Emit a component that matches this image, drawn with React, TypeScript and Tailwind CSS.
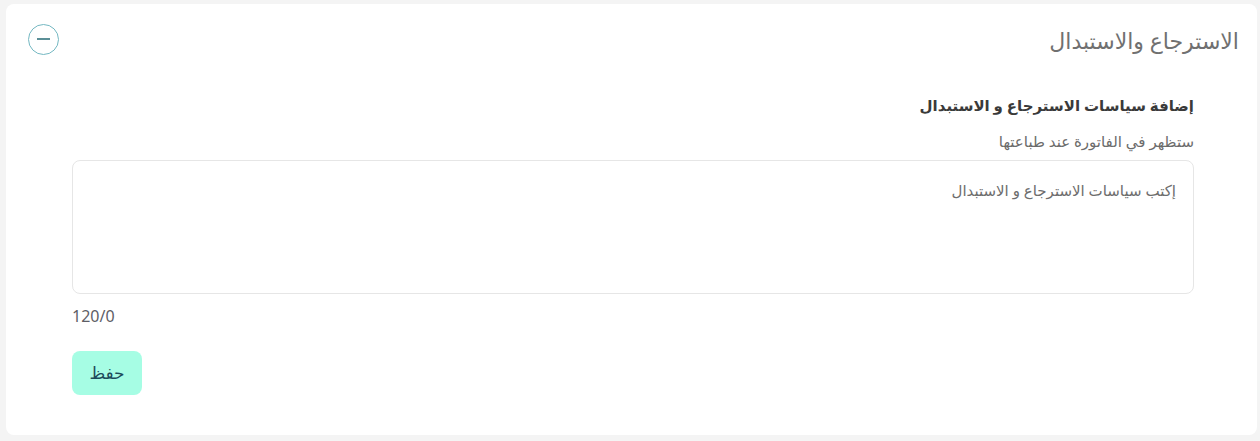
import React, { useState } from "react";

const MAX = 120;

export default function App() {
  const [policy, setPolicy] = useState("");

  return (
    <div
      className="min-h-[441px] bg-[#f4f4f4] pt-1 pb-[6px] pl-[6px] pr-[3px]"
      style={{ fontFamily: '"Noto Sans", "DejaVu Sans", sans-serif' }}
    >
      <div dir="rtl" className="bg-white rounded-lg h-[431px] pt-[18px] pr-[18px] pl-[22px]">
        {/* header */}
        <div className="flex items-center justify-between">
          <h2 className="text-[22px] leading-8 text-[#707070] pt-[2px]">الاسترجاع والاستبدال</h2>
          <button className="w-[31px] h-[31px] rounded-full border border-[#74b8c2] flex items-center justify-center">
            <span className="block w-[13px] h-[2px] bg-[#5b8f97]" />
          </button>
        </div>

        {/* body */}
        <div className="mt-[37px] pr-[45px] pl-[44px]">
          <label className="block text-[15px] font-bold text-[#3a3a3a] leading-6">
            إضافة سياسات الاسترجاع و الاستبدال
          </label>
          <p className="mt-[14px] text-[15px] text-[#6b6b6b] leading-5">ستظهر في الفاتورة عند طباعتها</p>

          <textarea
            value={policy}
            maxLength={MAX}
            onChange={(e) => setPolicy(e.target.value)}
            placeholder="إكتب سياسات الاسترجاع و الاستبدال"
            className="mt-[9px] block w-full h-[134px] resize-none rounded-lg border border-[#e6e6e6] px-[17px] py-[17px] text-[15px] leading-6 text-[#444] placeholder:text-[#6d6d6d] outline-none"
          />

          <div dir="ltr" className="mt-[10px] text-[16px] text-[#5e5e66] leading-6">
            {MAX}/{policy.length}
          </div>

          <div dir="ltr" className="mt-[23px]">
            <button className="w-[70px] h-[44px] rounded-lg bg-[#a6fde4] text-[17px] text-[#1d4b5a]">حفظ</button>
          </div>
        </div>
      </div>
    </div>
  );
}
